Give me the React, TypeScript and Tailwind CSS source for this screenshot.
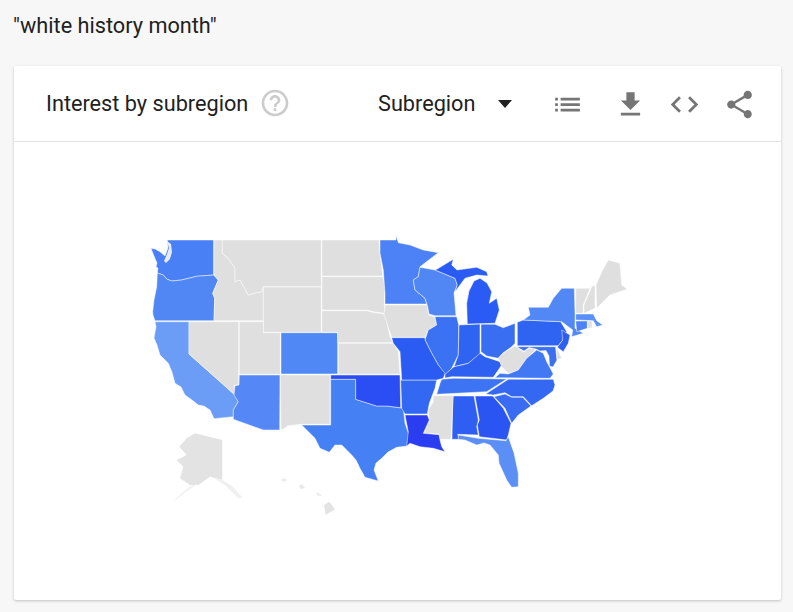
const GRAY = "#dfdfdf";

// coordinates are page pixels, the svg viewBox starts at 130,225
const states: { id: string; fill: string; d: string }[] = [
  { id: "WA", fill: "#4a80f5", d: "167.3,240 213.7,240 213.7,275 196.7,276.3 181.7,280 171.7,281 166.7,279 163.3,275 157.3,273 158,268 156,267 157,263 154,256 151,248.3 155,249 160,251.7 165,256 168,248" },
  { id: "OR", fill: "#5087f5", d: "157.3,273 163.3,275 166.7,279 171.7,281 181.7,280 196.7,276.3 213.7,275 218.3,280 212.7,293.3 214.7,298.3 214,320.7 155,320.7 153,315 152.7,311.7 154,300 156.7,286.7" },
  { id: "CA", fill: "#6b9df7", d: "155,321.7 189,321.7 189,354 235,395 238.3,401.7 233.3,410 233.3,416.7 214,418.7 210,410 204,406 198.3,405 192,400 185,395 181,387 175,383.3 172,372 168.3,363.3 160,355 157,345 154,338 156,326.7" },
  { id: "NV", fill: GRAY, d: "189,321.7 238.7,321.7 238.7,385 234,385 235,395 189,354" },
  { id: "ID", fill: GRAY, d: "214,240 222.3,240 222.3,253.3 228,258 235,268.3 235,281.7 240,280 248.3,295 255,293 261.7,291.7 263.3,287 263.3,320.7 214,320.7 214.7,298.3 212.7,293.3 218.3,280 214,275" },
  { id: "MT", fill: GRAY, d: "222.3,240 321.3,240 321.3,286.7 263.3,286.7 261.7,291.7 255,293 248.3,295 240,280 235,281.7 235,268.3 228,258 222.3,253.3" },
  { id: "WY", fill: GRAY, d: "263.3,287 321.3,287 321.3,332.3 263.3,332.3" },
  { id: "UT", fill: GRAY, d: "239.3,321.7 263.3,321.7 263.3,332.7 280.3,332.7 280.3,374.3 239.3,374.3" },
  { id: "CO", fill: "#5088f5", d: "281,332.7 337.7,332.7 337.7,374 281,374" },
  { id: "AZ", fill: "#5588f6", d: "239.3,375 280,375 279.7,430 263.3,430 233.3,419.3 233.3,410 238.3,401.7 234,395 235,385.7 239,385" },
  { id: "NM", fill: GRAY, d: "280.3,375 330,375 330,424.3 300.7,424.3 286.7,426 286.7,427 281,430" },
  { id: "TX", fill: "#4680f5", d: "330.7,379.3 355.7,379.3 355.7,399.3 360,400.7 376.7,406 386.7,406 403.3,408.3 405,423.3 409,435 407.3,446 396.7,447.3 388,452 381.7,458.3 376,463 374,470 378.3,481 365,477.3 360,468.3 356,460 351.7,455 341.7,445 335,445 329.3,452.3 320,448.3 315,438.3 301.7,425 330.7,425" },
  { id: "OK", fill: "#2b4df4", d: "330.7,375 400,375 400.7,407.7 386.7,406 376.7,406 360,400.7 355.7,399.3 355.7,379.3 330.7,379.3" },
  { id: "ND", fill: GRAY, d: "322,240 379,240 380,253.3 382.7,276 322,276" },
  { id: "SD", fill: GRAY, d: "322,276.7 382.3,276.7 385,283 384.3,305 385,313.3 373.3,311.7 366.7,310 322,310" },
  { id: "NE", fill: GRAY, d: "322,310.7 366.7,310.7 373.3,312.5 385,314 390,336.7 393,342.7 337.7,342.7 337.7,332.3 322,332.3" },
  { id: "KS", fill: GRAY, d: "338.3,343.3 393.3,343.3 398.3,351.7 400,374.3 338.3,374.3" },
  { id: "MN", fill: "#4c82f5", d: "380,240 396,240 396,235 398.3,242.7 410,245 423.3,250 438.3,252.7 420,266.7 418.3,276.7 413.3,280 415,290 425,298.3 426.7,304 385,304 385,293.3 383.3,270 380,253" },
  { id: "IA", fill: GRAY, d: "385,305 426.7,305 429,315 435,317 436.7,325 428.3,330 425,337.3 391.7,337.3 384,315" },
  { id: "WI", fill: "#5087f5", d: "420,267.3 435,270 455,278.3 457.3,285 454,293 456,315.7 435,315.7 429,314 427.7,306.7 425,298.3 415,290 413.3,280 418.3,276.7" },
  { id: "IL", fill: "#3b72f3", d: "435,316.7 456.7,316.7 458.7,325 458.3,355 451.7,368.3 445,375 438.3,365 431.7,353.3 425,340 428.3,330 436.7,325" },
  { id: "IN", fill: "#2f64f2", d: "459,325 480,324 480,354 468.3,363.3 454,366.7 458.3,355" },
  { id: "MI1", fill: "#2a5cf5", d: "467.3,324 495,323.3 499.3,310 496.7,298.3 489.3,303.3 491.7,291.7 487,283 480,278.3 474,281 469,291 466.7,303.3" },
  { id: "MI2", fill: "#2a5cf5", d: "436.7,269.3 453.3,259.3 451.7,265 457,270 476.7,267.3 486.7,271.7 488,276 476.7,275 465,278.3 455,291.7 457.3,285 455,278.3 435,270" },
  { id: "OH", fill: "#3a6ef2", d: "481,324.3 495,324.3 503.3,327.7 515,323.3 515,343.3 511.7,346.7 502.7,353.3 498.3,358.3 486.7,356 481,351.7" },
  { id: "KY", fill: "#2e60f2", d: "480,353.3 485,356.7 500,361.7 501.7,365 493.3,377.3 451.7,376.7 445,378 445,374.3 454,366.7 462,365 468.3,363.3" },
  { id: "WV", fill: GRAY, d: "498.3,358.3 502.7,353.3 515,346 518,348 524,352 529,348 536,349.5 526.7,358.3 518.3,370 508.3,373.3 501.7,366.7" },
  { id: "PA", fill: "#2f64f3", d: "517.3,322.3 523.3,320 560.7,321.7 566.7,331.7 562.7,340 558.3,345.7 517.3,345.7" },
  { id: "NY", fill: "#5288f5", d: "523.3,320 530,315 528.3,307.3 548.3,307.3 553.3,298.3 561.7,288.3 574.3,288.3 575,313.3 575,328.3 583.3,333.3 571.7,336.7 572.7,330 561.7,321.7" },
  { id: "VT", fill: GRAY, d: "575.7,288.3 590,288.3 583.3,305 583.3,313.3 575.7,313.3" },
  { id: "NH", fill: GRAY, d: "591.7,286.7 595,285 595,308.3 584,313.3 584,305" },
  { id: "ME", fill: GRAY, d: "596,285 601.7,271.7 608.3,260 620,263.3 621.7,285 627.3,289.3 610,295 596.7,308.3" },
  { id: "MA", fill: "#5b90f6", d: "575.7,314 593.3,314 596.7,320.7 602.7,325 596.7,326.7 593.3,320.7 575.7,320" },
  { id: "CT", fill: "#4c82f5", d: "575.7,321 587.3,321 587.3,328.3 576.7,331.7" },
  { id: "RI", fill: GRAY, d: "588,321 592,321 592,327.7 588,328.3" },
  { id: "NJ", fill: "#2e5ef2", d: "561.7,330 570,335 568.3,343.3 563.3,351.7 557.3,347.3 562.7,340" },
  { id: "MD", fill: "#3b70f2", d: "517.3,346.7 555.5,346.7 557,360 553,367 549.5,366 549,356 546,350.5 540,351 536,349 529,347.5 524,351 518,347.5" },
  { id: "DE", fill: GRAY, d: "556.5,347.3 561.7,358.3 557,359.5" },
  { id: "VA", fill: "#4278f3", d: "495,377.7 500,373.3 508.3,374 518.3,370 526.7,358.3 536.7,350 543.3,353.3 546.7,361.7 553.3,374 550,378.3" },
  { id: "TN", fill: "#3d74f3", d: "453.3,378.3 506.7,379 486.7,391.7 436.7,394.3 440,383.3 441.7,379.3" },
  { id: "NC", fill: "#3568f2", d: "508.3,379.3 553.3,379.3 555,385 553,391 543.3,398.3 531.7,405.7 523.3,396.7 511.7,396.7 505,392.7 493.3,395 485.7,394" },
  { id: "SC", fill: "#3a6cf3", d: "494,396.7 505,394 511.7,397.3 522.7,397.3 531,406 518.3,415 511.7,423.3 505,408.3" },
  { id: "GA", fill: "#2b55f3", d: "475,396 492.7,396 503.3,408.3 511,423.3 508.3,435 506.7,440 479.3,436.7 477.3,425 479.3,420" },
  { id: "AL", fill: "#2f5ef3", d: "452.7,396 474,396 478.3,420 476.7,426.7 478.3,435 457.7,434.3 459.3,439.3 452,439.3" },
  { id: "MS", fill: GRAY, d: "433.3,395.7 453.3,395.7 451,439.3 440,439.3 439,434 424,433.3 429.3,420 428.3,410 433.3,401.7" },
  { id: "LA", fill: "#2a3df0", d: "405,415 427.3,415 429.3,420 423.3,433.3 439,434.7 440,440 441.7,446.7 445,451.7 433.3,448.3 420,446.7 410,443.3 406.7,446 408.3,431.7" },
  { id: "AR", fill: "#3369f2", d: "400.7,380 436.7,380 435,388.3 429.3,403.3 427.3,414 405,414 401.7,408.3" },
  { id: "MO", fill: "#2a5cf3", d: "391.7,337.7 425,337.7 425,340 431.7,353.3 438.3,365 445,373.3 443.3,378.3 436.7,380 401.7,380 400,351.7 393.3,343.3" },
  { id: "FL", fill: "#5b8ff6", d: "458.3,435 478.3,438.3 506,440.7 508.3,436.7 514,453 518.3,473.3 518.3,486.7 511.7,487.3 506.7,480 499,463 498.3,455 490,445 484,443 476.7,445 465,440 458.3,439.3" },
];

function Icon({ d, className }: { d: string; className: string }) {
  return (
    <svg viewBox="0 0 24 24" className={className} fill="currentColor">
      <path d={d} />
    </svg>
  );
}

export default function App() {
  return (
    <div className="w-[793px] h-[612px] overflow-hidden bg-[#f7f7f7] font-['Roboto',sans-serif] text-[#212121]">
      <div className="h-[66px] pl-[13px] pt-[12px] text-[21.7px] leading-[28px] whitespace-nowrap">"white history month"</div>

      <div className="ml-[14px] w-[767px] h-[534px] bg-white rounded-[2px] shadow-[0_1px_3px_rgba(0,0,0,0.22)]">
        {/* header */}
        <div className="h-[76px] flex items-center border-b border-[#e4e4e4] pl-[32px] pt-[2px]">
          <span className="text-[21.7px] w-[202px] whitespace-nowrap">Interest by subregion</span>
          <Icon
            className="w-[32px] h-[32px] ml-[11px] -mt-[4px] text-[#cccccc]"
            d="M11 18h2v-2h-2v2zm1-16C6.48 2 2 6.48 2 12s4.48 10 10 10 10-4.48 10-10S17.52 2 12 2zm0 18c-4.41 0-8-3.59-8-8s3.59-8 8-8 8 3.59 8 8-3.59 8-8 8zm0-14c-2.21 0-4 1.79-4 4h2c0-1.1.9-2 2-2s2 .9 2 2c0 2-3 1.75-3 5h2c0-2.25 3-2.5 3-5 0-2.21-1.79-4-4-4z"
          />
          <span className="text-[21.7px] ml-[87px] w-[97px] whitespace-nowrap">Subregion</span>
          <span className="ml-[23px] -mt-[2px] w-0 h-0 border-x-[7.5px] border-x-transparent border-t-[8px] border-t-[#212121]" />
          <div className="flex items-center text-[#757575] ml-[39px] -mt-[1px]">
            <Icon className="w-[33px] h-[33px]" d="M3 13h2v-2H3v2zm0 4h2v-2H3v2zm0-8h2V7H3v2zm4 4h14v-2H7v2zm0 4h14v-2H7v2zM7 7v2h14V7H7z" />
            <Icon className="w-[33px] h-[33px] ml-[29.5px]" d="M19 9h-4V3H9v6H5l7 7 7-7zM5 18v2h14v-2H5z" />
            <Icon className="w-[33px] h-[33px] ml-[21.5px]" d="M9.4 16.6L4.8 12l4.6-4.6L8 6l-6 6 6 6 1.4-1.4zm5.2 0l4.6-4.6-4.6-4.6L16 6l6 6-6 6-1.4-1.4z" />
            <Icon className="w-[33px] h-[33px] ml-[21.5px]" d="M18 16.08c-.76 0-1.44.3-1.96.77L8.91 12.7c.05-.23.09-.46.09-.7s-.04-.47-.09-.7l7.05-4.11c.54.5 1.25.81 2.04.81 1.66 0 3-1.34 3-3s-1.34-3-3-3-3 1.34-3 3c0 .24.04.47.09.7L8.04 9.81C7.5 9.31 6.79 9 6 9c-1.66 0-3 1.34-3 3s1.34 3 3 3c.79 0 1.5-.31 2.04-.81l7.12 4.16c-.05.21-.08.43-.08.65 0 1.61 1.31 2.92 2.92 2.92 1.61 0 2.92-1.31 2.92-2.92s-1.31-2.92-2.92-2.92z" />
          </div>
        </div>

        {/* map */}
        <div className="pl-[116px] pt-[83px]">
          <svg viewBox="130 225 510 300" className="w-[510px] h-[300px]">
            {states.map((s) => (
              <polygon key={s.id} points={s.d} fill={s.fill} stroke="#ffffff" strokeOpacity={0.6} strokeWidth={0.8} strokeLinejoin="round" />
            ))}
            {/* puget sound */}
            <polygon fill="#ffffff" fillOpacity={0.85} points="167,241 171,244 172,252 170,259 166,263 164,261 167,254 169,248" />
            {/* alaska + hawaii are paler and have no borders */}
            <polygon fill="#e3e3e3" points="195,433.3 222.3,440 222.3,480 210,476.7 198.3,485 190,485 180,478.3 183.3,466.7 176.7,460 186.7,455 179.3,446.7 186.7,438.3" />
            <polygon fill="#f0f0f0" points="222.3,480 232,486 243,498 238,498 226,486 214,478" />
            <polygon fill="#f3f3f3" points="198,484 186,492 173,502 175,499 190,486" />
            <polygon fill="#e3e3e3" points="324,505 329.3,501.7 335,509.3 325.7,515" />
            <polygon fill="#e8e8e8" points="299,486 302,484 305,488 301,489" />
            <polygon fill="#ececec" points="281,480 284,478 287,480 284,482" />
            <polygon fill="#eeeeee" points="316,493 319,493 322,496 318,496" />
          </svg>
        </div>
      </div>
    </div>
  );
}
